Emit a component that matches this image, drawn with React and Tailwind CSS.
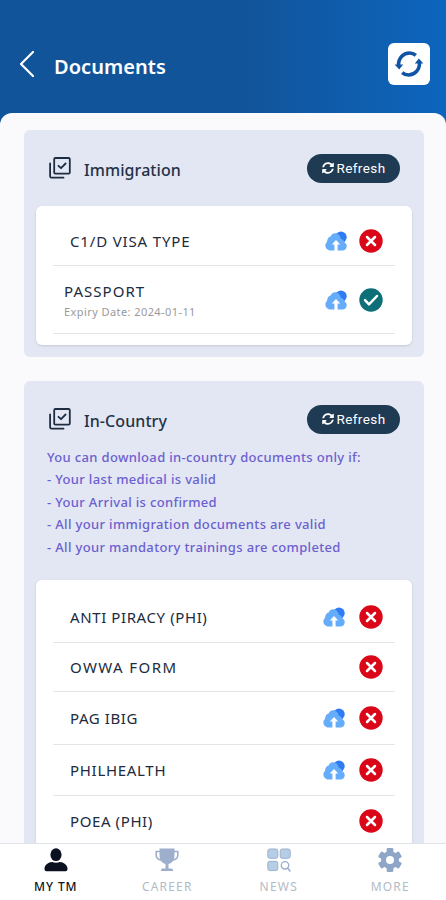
import React from 'react';
import { FaSyncAlt } from 'react-icons/fa';

const immigrationDocs = [
    { name: 'C1/D VISA TYPE', upload: true, valid: false, height: 'h-[49px]', tracking: 'tracking-[0.85px]' },
    { name: 'PASSPORT', expiry: '2024-01-11', upload: true, valid: true, height: 'h-[68px]', tracking: 'tracking-[1.05px]' },
];

const countryDocs = [
    { name: 'ANTI PIRACY (PHI)', upload: true, valid: false, height: 'h-[52px]', tracking: 'tracking-[0.6px]' },
    { name: 'OWWA FORM', upload: false, valid: false, height: 'h-[49px]', tracking: 'tracking-[1.4px]' },
    { name: 'PAG IBIG', upload: true, valid: false, height: 'h-[53px]', tracking: 'tracking-[0.6px]' },
    { name: 'PHILHEALTH', upload: true, valid: false, height: 'h-[51px]', tracking: 'tracking-[0.7px]' },
    { name: 'POEA (PHI)', upload: false, valid: false, height: 'h-[51px]', tracking: 'tracking-[0.6px]' },
];

const SyncIcon = () => (
    <svg width="30" height="26" viewBox="0 0 30 26" fill="none" stroke="#1254a4" strokeWidth="3.6">
        <path d="M4.6 14.5C4 7 9.5 2 15.5 2c2.500 0 4.600.8 6.300 2.300" />
        <path d="M25.400 11.500c.6 7.500-4.900 12.500-10.900 12.500-2.500 0-4.600-.8-6.300-2.300" />
        <path d="M.6 13.600h8.600L5.200 18.400z" fill="#1254a4" stroke="none" />
        <path d="M29.400 12.400h-8.600l4-4.800z" fill="#1254a4" stroke="none" />
    </svg>
);

const ListIcon = () => (
    <svg width="22" height="22" viewBox="0 0 22 22" fill="none" stroke="#1f2d42" strokeWidth="1.800" strokeLinecap="round" strokeLinejoin="round">
        <rect x="5.200" y="1" width="15.600" height="15.600" rx="1.200" />
        <path d="M1.100 6.500V19.200a1.500 1.500 0 0 0 1.500 1.500H14.500" />
        <path d="M9.500 8.800l2.500 2.400 4.600-4.700" />
    </svg>
);

const CloudIcon = () => (
    <svg width="24" height="20" viewBox="0 0 24 20">
        <circle cx="17" cy="6.200" r="5.700" fill="#2f7bf2" />
        <path d="M5.300 19.500A5.100 5.100 0 0 1 3 10.700C3.300 7.800 4.500 6 6.600 5.500 7.600 3.100 9.200 2.200 11 2.200c3.300 0 5.300 2.500 5.800 5.600 2 .5 3.200 1.900 3.700 3.700a4.300 4.300 0 0 1-1.500 8z" fill="#65adfb" />
        <path d="M12 9l4.200 4.400h-2.600v6.600h-3.200v-6.600H7.800z" fill="#fff" />
    </svg>
);

const StatusIcon = ({ valid }) => (
    <svg width="24" height="24" viewBox="0 0 24 24" fill="none" stroke="#fff">
        <circle cx="12" cy="12" r="11.700" fill={valid ? '#0d7078' : '#da0718'} stroke="none" />
        {valid
            ? <path d="M6 12.200l4 4.200 8-8.400" strokeWidth="2.500" strokeLinecap="round" strokeLinejoin="round" />
            : <path d="M8 8l8 8M16 8l-8 8" strokeWidth="2.500" strokeLinecap="round" />}
    </svg>
);

const PersonIcon = () => (
    <svg width="24" height="24" viewBox="0 0 24 24" fill="#0b1120">
        <ellipse cx="12" cy="6.700" rx="5.600" ry="6.400" />
        <path d="M.5 20.800C.5 16.800 4.500 14.300 8 14c2.500 1 5.500 1 8 0 3.500.3 7.500 2.800 7.500 6.800 0 1.700-.7 2.500-2 2.500h-19c-1.300 0-2-.8-2-2.500z" />
    </svg>
);

const TrophyIcon = () => (
    <svg width="24" height="24" viewBox="0 0 24 24" fill="#9dafcc">
        <path d="M4.500.5h15V7c0 4.500-2 8-6 9v4.500h3c1 0 1.500.8 1.500 2.500H6c0-1.700.5-2.500 1.500-2.500h3V16c-4-1-6-4.500-6-9z" />
        <path d="M5.500 3.500H1.200V7c0 3 2 4.700 5.300 5.200M18.500 3.500h4.300V7c0 3-2 4.700-5.300 5.200" fill="none" stroke="#9dafcc" strokeWidth="1.600" />
    </svg>
);

const NewsIcon = () => (
    <svg width="24" height="24" viewBox="0 0 24 24" fill="#b5cde5" stroke="#9dafcc" strokeWidth="1">
        <rect x=".8" y="1" width="10" height="9.300" rx="2" />
        <rect x="13.200" y="1" width="10" height="9.300" rx="2" />
        <rect x=".8" y="13.300" width="10" height="9.300" rx="2" />
        <circle cx="18" cy="17.300" r="3.700" fill="none" strokeWidth="1.400" />
        <path d="M20.500 20l2.500 3" strokeWidth="1.500" strokeLinecap="round" />
    </svg>
);

const GearIcon = () => (
    <svg width="24" height="24" viewBox="0 0 24 24" fill="#8fa6c9">
        <rect x="8.700" y="0" width="6.600" height="24" rx="1.200" />
        <rect x="8.700" y="0" width="6.600" height="24" rx="1.200" transform="rotate(60 12 12)" />
        <rect x="8.700" y="0" width="6.600" height="24" rx="1.200" transform="rotate(120 12 12)" />
        <circle cx="12" cy="12" r="9" />
        <circle cx="12" cy="12" r="4" fill="#fff" />
    </svg>
);

const CardHeader = ({ title }) => (
    <div className="flex h-[76px] items-center pl-[25px] pr-6">
        <ListIcon />
        <h2 className="ml-[13px] mt-1 flex-1 text-base font-medium tracking-[0.08px] text-[#253247]">{title}</h2>
        <button className="flex h-[29px] w-[93px] items-center justify-center gap-[3px] rounded-full bg-[#1f3a53] font-['Roboto',sans-serif] text-[13.5px] tracking-[0.4px] text-white">
            <FaSyncAlt size={12} /> Refresh
        </button>
    </div>
);

const DocRow = ({ doc, cloudGap }) => (
    <div className={`flex items-center border-b border-[#e3e4e7] pr-3 ${doc.height}`}>
        {doc.expiry ? (
            <div className="flex-1 pl-[11px] pt-px">
                <p className={`text-[15px] leading-5 text-[#202b40] ${doc.tracking}`}>{doc.name}</p>
                <p className="mt-[3px] text-[11px] leading-4 tracking-[0.42px] text-[#9a9a9c]">Expiry Date: {doc.expiry}</p>
            </div>
        ) : (
            <p className={`flex-1 pl-[17px] text-[15px] leading-5 text-[#202b40] ${doc.tracking}`}>{doc.name}</p>
        )}
        <div className={`flex items-center ${cloudGap}`}>
            {doc.upload && <CloudIcon />}
            <StatusIcon valid={doc.valid} />
        </div>
    </div>
);

const NavItem = ({ label, icon, active }) => (
    <div className="flex flex-1 flex-col items-center pt-1">
        {icon}
        <span className={`mt-[7px] text-xs leading-4 ${active ? 'font-medium tracking-[0.9px] text-[#10131c]' : 'tracking-[1.2px] text-[#b3bac6]'}`}>{label}</span>
    </div>
);

const App = () => {
    return (
        <div className="flex h-[900px] w-[446px] flex-col overflow-hidden bg-[linear-gradient(90deg,#11549a_0%,#11549a_55%,#0d65bd_100%)] font-['Noto_Sans',sans-serif]">
            <header className="flex h-[113px] shrink-0 items-end pb-7 pl-[19px] pr-4">
                <svg className="mb-[7px]" width="16" height="28" viewBox="0 0 16 28" fill="none" stroke="#fff" strokeWidth="2.200" strokeLinecap="round" strokeLinejoin="round">
                    <path d="M14 2L2 14l12 12" />
                </svg>
                <h1 className="mb-1 ml-[19px] flex-1 text-xl font-semibold tracking-[0.05px] text-white">Documents</h1>
                <button className="flex h-[42px] w-[42px] items-center justify-center rounded-md bg-white">
                    <SyncIcon />
                </button>
            </header>

            <main className="flex-1 overflow-hidden rounded-t-xl bg-[#fafafc] pl-6 pr-[22px] pt-[17px]">
                <section className="h-[227px] rounded-md bg-[#e2e7f3]">
                    <CardHeader title="Immigration" />
                    <div className="mx-3 h-[139px] rounded-md bg-white px-[17px] pt-[11px] shadow">
                        {immigrationDocs.map(doc => <DocRow key={doc.name} doc={doc} cloudGap="gap-[11px]" />)}
                    </div>
                </section>

                <section className="mt-6 rounded-md bg-[#e2e7f3]">
                    <CardHeader title="In-Country" />
                    <div className="-mt-[11px] h-[134px] pl-[23px] text-[13px] font-medium leading-[22.400px] tracking-[0.34px] text-[#6c60d0]">
                        <p>You can download in-country documents only if:</p>
                        <p>- Your last medical is valid</p>
                        <p>- Your Arrival is confirmed</p>
                        <p>- All your immigration documents are valid</p>
                        <p>- All your mandatory trainings are completed</p>
                    </div>
                    <div className="mx-3 rounded-md bg-white px-[17px] pt-[11px] shadow">
                        {countryDocs.map(doc => <DocRow key={doc.name} doc={doc} cloudGap="gap-[13px]" />)}
                    </div>
                </section>
            </main>

            <nav className="flex h-[57px] shrink-0 border-t border-[#dfe2e8] bg-white">
                <NavItem label="MY TM" icon={<PersonIcon />} active />
                <NavItem label="CAREER" icon={<TrophyIcon />} />
                <NavItem label="NEWS" icon={<NewsIcon />} />
                <NavItem label="MORE" icon={<GearIcon />} />
            </nav>
        </div>
    );
};

export default App;
